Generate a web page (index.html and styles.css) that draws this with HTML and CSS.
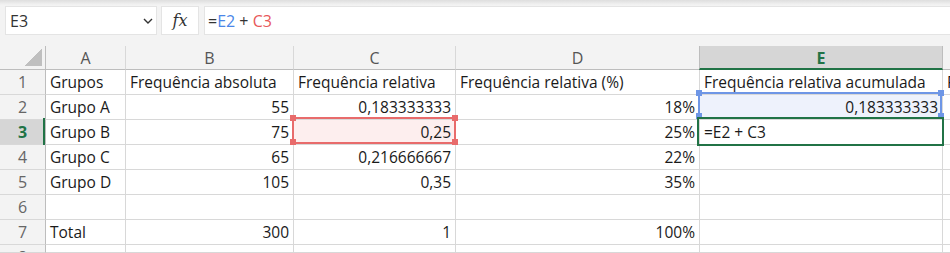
FILE: index.html
```html
<!DOCTYPE html>
<html lang="pt">
<head>
<meta charset="utf-8">
<link rel="stylesheet" href="styles.css">
</head>
<body>
<div class="toolbar">
  <div class="namebox">
    <span class="name">E3</span>
    <svg class="chev" width="10" height="6" viewBox="0 0 10 6"><path d="M1 1l4 4 4-4" fill="none" stroke="#333" stroke-width="1.4"/></svg>
  </div>
  <div class="fxbox"><span class="fx">fx</span></div>
  <div class="formula"><span class="op">=</span><span class="ref-blue">E2</span><span class="op"> + </span><span class="ref-red">C3</span></div>
</div>
<div class="sheet">
  <div class="corner"><span class="tri"></span></div>
  <div class="ch">A</div><div class="ch">B</div><div class="ch">C</div><div class="ch">D</div><div class="ch ch-active">E</div><div class="ch ch-f"></div>

  <div class="rh">1</div><div class="c">Grupos</div><div class="c">Frequência absoluta</div><div class="c">Frequência relativa</div><div class="c">Frequência relativa (%)</div><div class="c">Frequência relativa acumulada</div><div class="c">F</div>

  <div class="rh">2</div><div class="c">Grupo A</div><div class="c r">55</div><div class="c r">0,183333333</div><div class="c r">18%</div><div class="c r blue-bg">0,183333333</div><div class="c"></div>

  <div class="rh rh-active">3</div><div class="c">Grupo B</div><div class="c r">75</div><div class="c r red-bg">0,25</div><div class="c r">25%</div><div class="c">=E2 + C3</div><div class="c"></div>

  <div class="rh">4</div><div class="c">Grupo C</div><div class="c r">65</div><div class="c r">0,216666667</div><div class="c r">22%</div><div class="c"></div><div class="c"></div>

  <div class="rh">5</div><div class="c">Grupo D</div><div class="c r">105</div><div class="c r">0,35</div><div class="c r">35%</div><div class="c"></div><div class="c"></div>

  <div class="rh">6</div><div class="c"></div><div class="c"></div><div class="c"></div><div class="c"></div><div class="c"></div><div class="c"></div>

  <div class="rh">7</div><div class="c">Total</div><div class="c r">300</div><div class="c r">1</div><div class="c r">100%</div><div class="c"></div><div class="c"></div>

  <div class="rh">8</div><div class="c"></div><div class="c"></div><div class="c"></div><div class="c"></div><div class="c"></div><div class="c"></div>

  <div class="sel sel-red"><i class="h tl"></i><i class="h tr"></i><i class="h bl"></i><i class="h br"></i></div>
  <div class="sel sel-blue"><i class="h tl"></i><i class="h tr"></i><i class="h bl"></i><i class="h br"></i></div>
  <div class="sel sel-green"></div>
  <div class="row-mark"></div>
</div>
</body>
</html>
```

FILE: styles.css
```css
* { box-sizing: border-box; }
html, body { margin: 0; padding: 0; background: #fff; }
body {
  font-family: "Open Sans", "Noto Sans", sans-serif;
  font-size: 15.5px;
  color: #1f1f1f;
  width: 950px;
  height: 253px;
  overflow: hidden;
}

.toolbar {
  height: 46px;
  display: flex;
  align-items: flex-start;
  padding: 6px 0 0 5px;
  gap: 4px;
  font-size: 16px;
  background: linear-gradient(#dedede 0, #f3f3f3 5px, #f3f3f3 100%);
}
.namebox, .fxbox, .formula {
  height: 29px;
  background: #fff;
  border: 1px solid #e4e4e4;
  display: flex;
  align-items: center;
}
.namebox {
  width: 152px;
  padding: 0 0 0 4px;
  justify-content: space-between;
}
.name { color: #333; }
.chev { margin-right: 3px; }
.fxbox {
  width: 38px;
  justify-content: center;
}
.fx {
  font-family: "DejaVu Serif", "Liberation Serif", serif;
  font-style: italic;
  font-size: 16px;
  color: #333;
}
.formula {
  flex: 1;
  margin-left: 1px;
  padding-left: 3px;
  border-right: none;
}
.op { color: #333; white-space: pre; }
.ref-blue { color: #4a86e8; }
.ref-red { color: #e8585a; }

.sheet {
  position: relative;
  display: grid;
  grid-template-columns: 46px 80px 168px 162px 244px 243px 1fr;
  grid-template-rows: 24px repeat(7, 25px) 8px;
}
.corner, .ch {
  background: #f3f3f3;
  border-right: 1px solid #d8d8d8;
  border-bottom: 1px solid #bdbdbd;
}
.corner {
  display: flex;
  align-items: flex-end;
  justify-content: flex-end;
  padding: 0 3px 3px 0;
  border-right-color: #bdbdbd;
}
.tri {
  width: 18px;
  height: 18px;
  background: linear-gradient(to bottom right, transparent 50%, #bfbfbf 50%);
}
.ch {
  color: #555;
  text-align: center;
  line-height: 24px;
  font-size: 16px;
}
.ch-active {
  background: #d6d6d6;
  color: #217346;
  font-weight: 700;
  border-right-color: #bdbdbd;
  border-left: 1px solid #bdbdbd;
  border-bottom: 2px solid #217346;
  margin-left: -1px;
}
.rh {
  background: #f3f3f3;
  color: #666;
  text-align: center;
  line-height: 24px;
  font-size: 16px;
  overflow: hidden;
  border-right: 1px solid #bdbdbd;
  border-bottom: 1px solid #d8d8d8;
}
.rh-active {
  background: #d6d6d6;
  color: #217346;
  font-weight: 700;
}
.c {
  border-right: 1px solid #d8d8d8;
  border-bottom: 1px solid #d8d8d8;
  padding: 0 4px 0 4px;
  line-height: 24px;
  white-space: nowrap;
  overflow: hidden;
  color: #1a1a1a;
}
.r { text-align: right; }
.blue-bg { background: #eef2fc; }
.red-bg { background: #fdeeee; }

.sel { position: absolute; }
.sel-red {
  left: 292px; top: 71px; width: 164px; height: 27px;
  border: 2px solid #e86b6b;
}
.sel-blue {
  left: 698px; top: 46px; width: 244px; height: 27px;
  border: 2px solid #6e96e6;
  border-bottom: none;
}
.sel-green {
  left: 697px; top: 71px; width: 247px; height: 29px;
  border: 2px solid #217346;
}
.h {
  position: absolute;
  width: 6px;
  height: 6px;
}
.sel-red .h { background: #e86b6b; }
.sel-blue .h { background: #6e96e6; }
.tl { left: -4px; top: -4px; }
.tr { right: -4px; top: -4px; }
.bl { left: -4px; bottom: -3px; }
.br { right: -4px; bottom: -3px; }
.sel-blue .bl, .sel-blue .br { bottom: 0; }
.row-mark {
  position: absolute;
  left: 43px; top: 72px;
  width: 2px; height: 27px;
  background: #217346;
}
```
